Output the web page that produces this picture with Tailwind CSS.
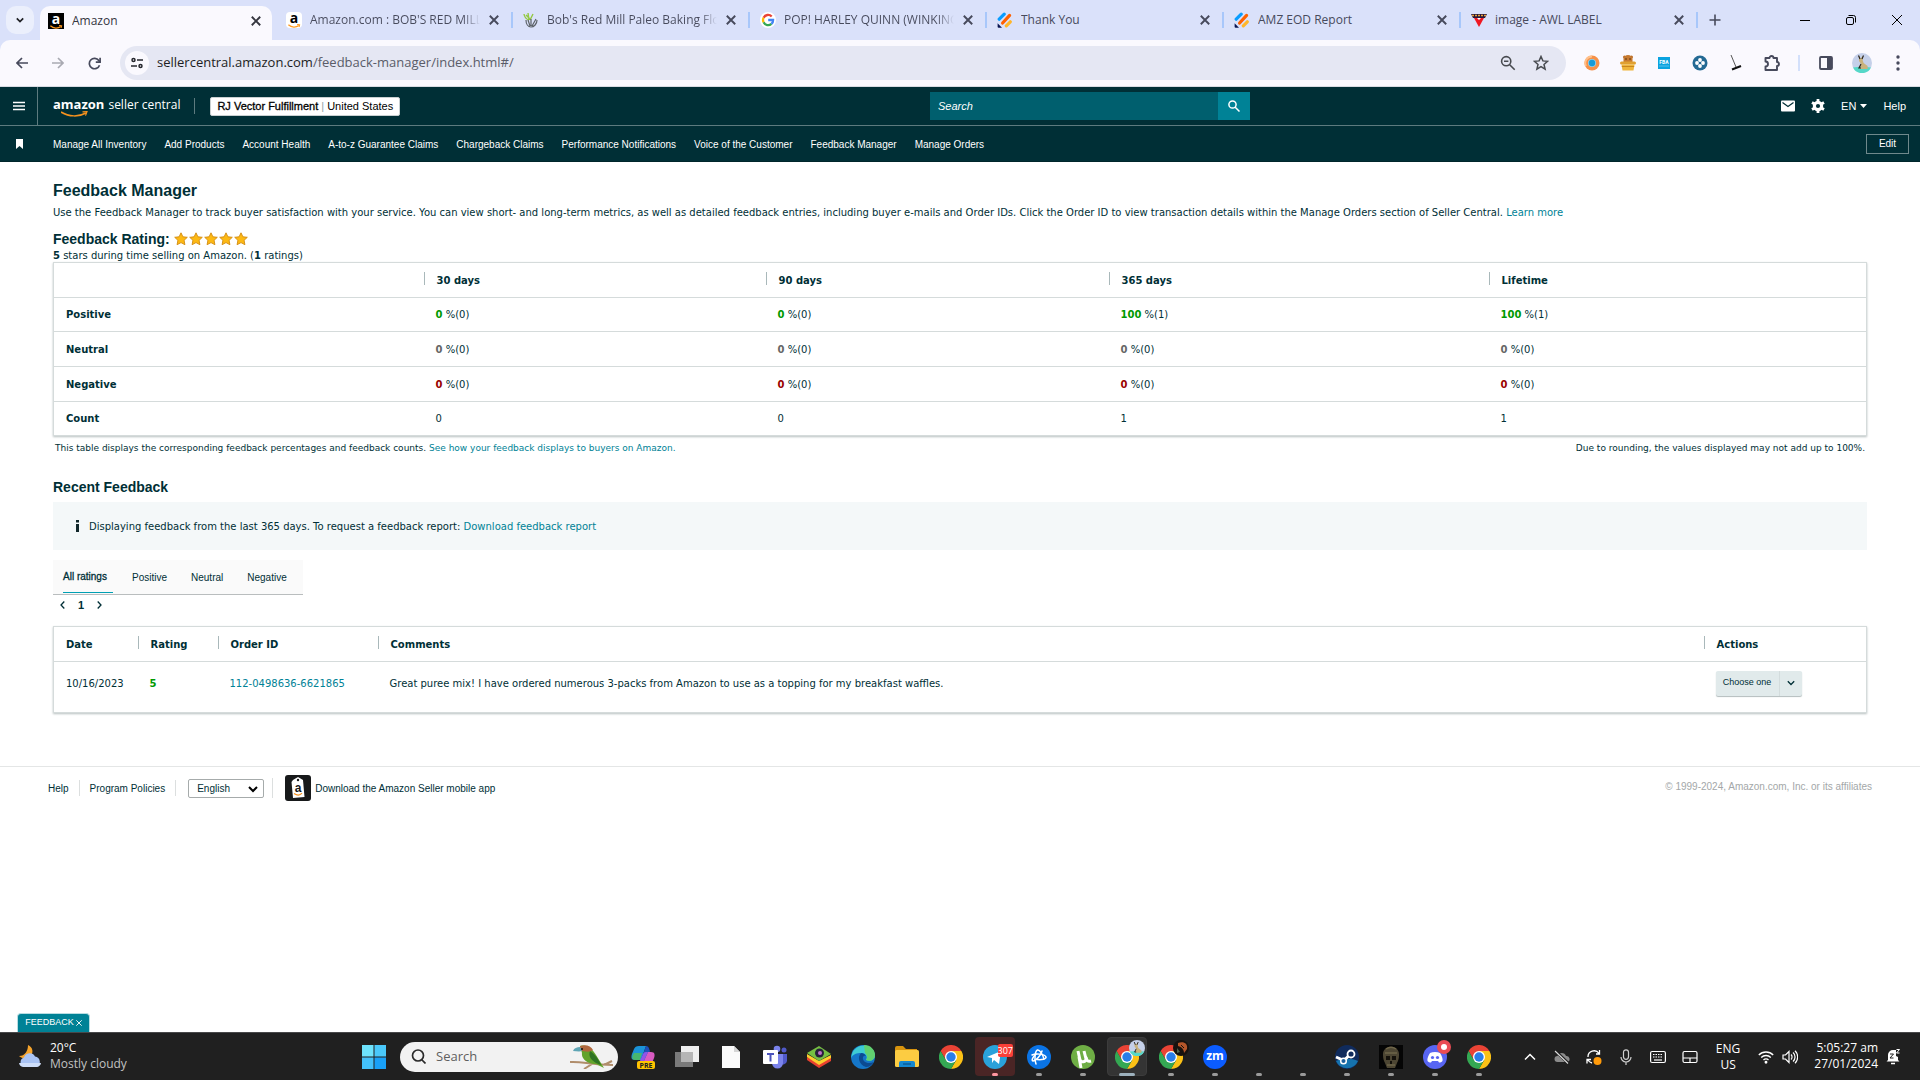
<!DOCTYPE html>
<html lang="en">
<head>
<meta charset="utf-8">
<title>Amazon</title>
<script src="https://cdn.jsdelivr.net/npm/@tailwindcss/browser@4"></script>
</head>
<body class="flex min-h-screen flex-col overflow-x-hidden bg-white font-['DejaVu_Sans',sans-serif] text-[10px] text-[#002f36]">

<svg class="hidden" aria-hidden="true">
  <symbol id="close" viewBox="0 0 10 10"><path d="M1.5 1.5l7 7M8.5 1.5l-7 7" stroke="currentColor" stroke-width="1.6" fill="none"/></symbol>
  <symbol id="chrome" viewBox="0 0 24 24">
    <path d="M12 6h10.4A12 12 0 0 0 1.6 6l5.2 9z" fill="#ea4335"/>
    <path d="M17.2 15L12 24A12 12 0 0 0 22.4 6H12z" fill="#fbc116"/>
    <path d="M6.8 15L1.6 6A12 12 0 0 0 12 24l5.2-9z" fill="#34a853"/>
    <circle cx="12" cy="12" r="6" fill="#fff"/><circle cx="12" cy="12" r="4.7" fill="#2a7de9"/>
  </symbol>
  <symbol id="star" viewBox="0 0 14 14"><path d="M7 .8l1.9 4 4.4.5-3.2 3 .8 4.4L7 10.6l-3.9 2.1.8-4.4-3.2-3 4.4-.5z" fill="#fdb913" stroke="#d28b10" stroke-width=".9"/></symbol>
  <symbol id="jot" viewBox="0 0 16 16"><g stroke-linecap="round" fill="none" stroke-width="3.2"><path d="M2.2 7.2l5-5" stroke="#0a9dff"/><path d="M5.6 11l7-7.6" stroke="#ff6100"/><path d="M9.3 13.8l4-4" stroke="#ffb629"/></g><path d="M.6 11.2l4.4 4.6H1.6a1 1 0 0 1-1-1z" fill="#0a1551"/></symbol>
  <symbol id="smile" viewBox="0 0 16 5"><path d="M1 1c4 3.6 9.5 3.6 13 .8" fill="none" stroke="#ff9a1f" stroke-width="1.6"/><path d="M11.8.6l3.4.2-.8 3" fill="none" stroke="#ff9a1f" stroke-width="1.2"/></symbol>
  <symbol id="avatar" viewBox="0 0 20 20"><circle cx="10" cy="10" r="10" fill="#c5d0e9"/><path d="M1 14.5c5-1 12-1 18 0A10 10 0 0 1 1 14.5z" fill="#55d8c8"/><path d="M7 3l1.5 2.5L11 3l-.4 4 1 3 4 3v3H8l1-5-2-3z" fill="#c9b27c"/><path d="M6.5 2.5L8 6M11.5 2.5L10 6M9 11l-2 4h2" stroke="#2b2620" stroke-width="1.2" fill="none"/></symbol>
</svg>

<!-- Tab strip -->
<header class="bg-[#dae1fa] font-['Open_Sans',sans-serif] text-[12px] text-[#474a5c]">
  <div class="flex h-10 items-end">
    <button aria-label="Search tabs" class="mr-1.5 ml-1.5 flex h-7 w-7 shrink-0 items-center justify-center self-center rounded-[10px] bg-[#ebeffc] text-[#1f2024]"><svg class="h-2 w-2" viewBox="0 0 8 8"><path d="M.8 2.3L4 5.5l3.200-3.200" fill="none" stroke="currentColor" stroke-width="1.7"/></svg></button>
    <nav class="flex h-full min-w-0 items-end" aria-label="Tabs">
      <div class="flex h-[34px] w-[232px] items-center gap-2 rounded-t-[10px] bg-[#faf9fe] pr-2.5 pb-1 pl-2 text-[#35363f]">
        <span class="relative h-4 w-4 shrink-0 bg-black text-center text-[14px] leading-[12px] font-bold text-white">a<svg class="absolute bottom-0 left-0 h-1 w-4"><use href="#smile"/></svg></span>
        <span class="min-w-0 flex-1 overflow-hidden whitespace-nowrap">Amazon</span>
        <button aria-label="Close tab"><svg class="h-3 w-3"><use href="#close"/></svg></button>
      </div>
      <div class="flex h-10 w-[241px] items-center gap-2 pr-[13px] pl-3.5">
        <span class="relative h-4 w-4 shrink-0 rounded-sm bg-white text-center text-[14px] leading-[11px] font-bold text-black">a<svg class="absolute bottom-0 left-0 h-1 w-4"><use href="#smile"/></svg></span>
        <span class="min-w-0 flex-1 overflow-hidden bg-linear-to-r from-[#474a5c] from-90% to-transparent bg-clip-text whitespace-nowrap text-transparent">Amazon.com : BOB'S RED MILL</span>
        <button aria-label="Close tab"><svg class="h-3 w-3"><use href="#close"/></svg></button>
      </div>
      <div class="flex h-10 w-[237px] items-center gap-2"><i class="mr-0.5 -ml-0.5 h-4 w-0.5 bg-[#a8c7fa]"></i>
        <svg class="h-4 w-4 shrink-0" viewBox="0 0 16 16"><path d="M6 8C3 7 1.5 5 1 2M6 8L5 1M7 8l3-6M7 7L3 3" stroke="#93c843" stroke-width="1.4" fill="none"/><path d="M3 8c0 4 2 7 5 7s6-3 6-7M7 14L5 8M8 14V7M9 14l4-7" stroke="#5b6167" stroke-width="1.2" fill="none"/></svg>
        <span class="min-w-0 flex-1 overflow-hidden bg-linear-to-r from-[#474a5c] from-90% to-transparent bg-clip-text whitespace-nowrap text-transparent">Bob's Red Mill Paleo Baking Flo</span>
        <button aria-label="Close tab" class="mr-[13px]"><svg class="h-3 w-3"><use href="#close"/></svg></button>
      </div>
      <div class="flex h-10 w-[237px] items-center gap-2"><i class="mr-0.5 -ml-0.5 h-4 w-0.5 bg-[#a8c7fa]"></i>
        <svg class="h-4 w-4 shrink-0" viewBox="0 0 16 16"><circle cx="8" cy="8" r="8" fill="#fff"/><g fill="none" stroke-width="2.3"><path d="M3.6 5.7A5 5 0 0 1 11.7 4.5" stroke="#ea4335"/><path d="M3.6 5.7a5 5 0 0 0 0 4.6" stroke="#fbbc05"/><path d="M3.6 10.3a5 5 0 0 0 7.8 1.6" stroke="#34a853"/><path d="M8.2 8h4.9a5 5 0 0 1-1.700 3.900" stroke="#4285f4"/></g></svg>
        <span class="min-w-0 flex-1 overflow-hidden bg-linear-to-r from-[#474a5c] from-90% to-transparent bg-clip-text whitespace-nowrap text-transparent">POP! HARLEY QUINN (WINKING</span>
        <button aria-label="Close tab" class="mr-[13px]"><svg class="h-3 w-3"><use href="#close"/></svg></button>
      </div>
      <div class="flex h-10 w-[237px] items-center gap-2"><i class="mr-0.5 -ml-0.5 h-4 w-0.5 bg-[#a8c7fa]"></i>
        <svg class="h-4 w-4 shrink-0"><use href="#jot"/></svg>
        <span class="min-w-0 flex-1 overflow-hidden whitespace-nowrap">Thank You</span>
        <button aria-label="Close tab" class="mr-[13px]"><svg class="h-3 w-3"><use href="#close"/></svg></button>
      </div>
      <div class="flex h-10 w-[237px] items-center gap-2"><i class="mr-0.5 -ml-0.5 h-4 w-0.5 bg-[#a8c7fa]"></i>
        <svg class="h-4 w-4 shrink-0"><use href="#jot"/></svg>
        <span class="min-w-0 flex-1 overflow-hidden whitespace-nowrap">AMZ EOD Report</span>
        <button aria-label="Close tab" class="mr-[13px]"><svg class="h-3 w-3"><use href="#close"/></svg></button>
      </div>
      <div class="flex h-10 w-[237px] items-center gap-2"><i class="mr-0.5 -ml-0.5 h-4 w-0.5 bg-[#a8c7fa]"></i>
        <svg class="h-4 w-4 shrink-0" viewBox="0 0 16 16"><path d="M0 2h16l-2 4H2z" fill="#2a1738"/><path d="M1 3.5h14" stroke="#e8a33a" stroke-width="1.5" stroke-dasharray="2 1"/><path d="M3 6h10l-5 9z" fill="#f01822"/><path d="M6 6h4l-2 2z" fill="#fff"/></svg>
        <span class="min-w-0 flex-1 overflow-hidden whitespace-nowrap">image - AWL LABEL</span>
        <button aria-label="Close tab" class="mr-[13px]"><svg class="h-3 w-3"><use href="#close"/></svg></button>
      </div>
      <i class="-ml-0.5 h-4 w-0.5 self-center bg-[#a8c7fa]"></i>
    </nav>
    <button aria-label="New tab" class="ml-[11px] self-center"><svg class="h-3 w-3" viewBox="0 0 12 12"><path d="M6 .5v11M.5 6h11" stroke="#474a5c" stroke-width="1.6"/></svg></button>
    <div class="ml-auto flex items-center gap-9 self-center pr-[18px] text-black">
      <button aria-label="Minimize"><svg class="h-2.5 w-2.5" viewBox="0 0 10 10"><path d="M0 5.5h10" stroke="currentColor"/></svg></button>
      <button aria-label="Restore"><svg class="h-2.5 w-2.5" viewBox="0 0 10 10" fill="none" stroke="currentColor"><rect x=".5" y="2.5" width="7" height="7" rx="1.5"/><path d="M2.5.5h5a2 2 0 0 1 2 2v5"/></svg></button>
      <button aria-label="Close window"><svg class="h-2.5 w-2.5" viewBox="0 0 10 10" stroke="currentColor"><path d="M0 0l10 10M10 0L0 10"/></svg></button>
    </div>
  </div>
  <!-- Toolbar -->
  <div class="flex h-[46px] items-center rounded-t-[10px] bg-[#faf9fe] pr-5 pl-4 text-[#474a5c]">
    <button aria-label="Back" class="mr-6"><svg class="h-3 w-3" viewBox="0 0 12 12" fill="none" stroke="#474a5c" stroke-width="1.7"><path d="M12 6H1.5M6 1L1 6l5 5"/></svg></button>
    <button aria-label="Forward" class="mr-6"><svg class="h-3 w-3" viewBox="0 0 12 12" fill="none" stroke="#a9aab2" stroke-width="1.7"><path d="M0 6h10.5M6 1l5 5-5 5"/></svg></button>
    <button aria-label="Reload" class="mr-[19px]"><svg class="h-[13px] w-[13px]" viewBox="0 0 13 13" fill="none" stroke="#474a5c" stroke-width="1.7"><path d="M11.5 8.2A5.2 5.2 0 1 1 10.8 3.5L12 5"/><path d="M12.1.8v4.400H7.8"/></svg></button>
    <div class="flex h-[34px] flex-1 items-center rounded-full bg-[#e5e7f3] pr-[17px] pl-[5px]">
      <button aria-label="Site information" class="mr-2 flex h-6 w-6 shrink-0 items-center justify-center rounded-full bg-[#faf9fe]"><svg class="h-3 w-3" viewBox="0 0 12 12" fill="none" stroke="#26272e" stroke-width="1.5"><circle cx="2.5" cy="3" r="1.5"/><path d="M6 3h6M0 9h6"/><circle cx="9.5" cy="9" r="1.5"/></svg></button>
      <div class="relative h-full flex-1"><input aria-label="Address" class="absolute inset-0 w-full bg-transparent text-[13px] outline-none">
        <span class="pointer-events-none flex h-full items-center text-[13px]"><span class="text-[#1c1d22]">sellercentral.amazon.com</span><span class="text-[#5a5c68]">/feedback-manager/index.html#/</span></span></div>
      <button aria-label="Zoom" class="mr-[17px]"><svg class="h-4 w-4" viewBox="0 0 16 16" fill="none" stroke="#474a4f" stroke-width="1.6"><circle cx="6.2" cy="6.2" r="4.6"/><path d="M9.7 9.7l5 5M4 6.2h4.400"/></svg></button>
      <button aria-label="Bookmark"><svg class="h-4 w-4" viewBox="0 0 16 16" fill="none" stroke="#474a4f" stroke-width="1.5"><path d="M8 1.5l1.9 4.4 4.7.4-3.600 3.100 1.100 4.700L8 11.600l-4.100 2.500L5 9.400 1.400 6.300l4.700-.4z"/></svg></button>
    </div>
    <div class="ml-[18px] flex items-center gap-5">
      <svg class="h-4 w-4" viewBox="0 0 16 16"><circle cx="8" cy="8" r="7.5" fill="#f69148"/><path d="M8 1.5A6.500 6.500 0 0 0 2 11" stroke="#ffc08a" stroke-width="2" fill="none"/><circle cx="8" cy="8" r="4" fill="#8ed0ee"/><circle cx="8" cy="8" r="3.2" fill="#169bd7"/></svg>
      <svg class="h-4 w-4" viewBox="0 0 16 16"><circle cx="4.5" cy="2" r="1.5" fill="#b96c28"/><circle cx="11.5" cy="2" r="1.5" fill="#b96c28"/><path d="M3.5 8V4a4 3.500 0 0 1 9 0v4z" fill="#c67a31"/><circle cx="6" cy="4" r=".7" fill="#3b1d08"/><circle cx="10" cy="4" r=".7" fill="#3b1d08"/><rect y="6.5" width="16" height="3" rx="1.5" fill="#e0a030"/><path d="M1.5 9.5h13l-1 6h-11z" fill="#efb53a"/><path d="M1.8 11.5h12.400" stroke="#c8861d"/></svg>
      <span class="flex h-3 w-4 items-center justify-center font-['Roboto',sans-serif]"><svg class="h-3 w-3" viewBox="0 0 12 12"><rect width="12" height="12" fill="#0aa3e0"/><text x="6" y="7" font-size="5" font-weight="700" text-anchor="middle" fill="#fff">FBA</text><path d="M1 9h10" stroke="#78cdf0" stroke-width=".7"/></svg></span>
      <svg class="h-4 w-4" viewBox="0 0 16 16"><circle cx="8" cy="8" r="7.5" fill="#246a94"/><g fill="#fff"><circle cx="8" cy="5" r="1.900"/><circle cx="8" cy="11" r="1.900"/><circle cx="5" cy="8" r="1.900"/><circle cx="11" cy="8" r="1.900"/></g><circle cx="8" cy="8" r="1" fill="#246a94"/></svg>
      <svg class="h-4 w-4" viewBox="0 0 16 16"><path d="M3 0l5 12" stroke="#555" stroke-width="1"/><path d="M4 14.500l9-3.500" stroke="#111" stroke-width="2"/></svg>
      <svg class="h-4 w-4" viewBox="0 0 16 16"><path d="M1.500 3h4a2 2 0 0 1 4 0h3.500v4a2 2 0 0 1 0 4v4H1.500v-3.500a2.500 2.500 0 0 0 0-5z" fill="none" stroke="#474a5c" stroke-width="1.900" stroke-linejoin="round"/></svg>
    </div>
    <i class="ml-[18px] h-4 w-0.5 bg-[#d3e0fb]"></i>
    <svg class="ml-[19px] h-3.5 w-3.5" viewBox="0 0 14 14"><rect x="1" y="1" width="12" height="12" rx="1" fill="none" stroke="#474a5c" stroke-width="1.800"/><path d="M8 1h5v12H8z" fill="#474a5c"/></svg>
    <svg class="ml-[19px] h-5 w-5"><use href="#avatar"/></svg>
    <svg class="ml-6 h-4 w-1" viewBox="0 0 4 16" fill="#474a5c"><circle cx="2" cy="2" r="1.700"/><circle cx="2" cy="8" r="1.700"/><circle cx="2" cy="14" r="1.700"/></svg>
  </div>
</header>

<!-- Seller Central header -->
<div class="bg-[#002f36] font-['Liberation_Sans',sans-serif] text-white">
  <div class="grid grid-cols-[930fr_320px_670fr] items-center border-t border-b border-t-[#d8dbe2] border-b-[#5d7b7f]">
    <div class="flex h-[38px] items-center">
      <button aria-label="Menu" class="flex h-full w-[38px] shrink-0 items-center justify-center border-r border-[#5d7b7f]"><svg class="h-2.5 w-3" viewBox="0 0 12 10"><path d="M0 1.5h12M0 5h12M0 8.5h12" stroke="#fff" stroke-width="1.5"/></svg></button>
      <a href="#" class="relative ml-[15px] flex items-baseline gap-1 pb-1 font-['Open_Sans',sans-serif] text-[12px] leading-4 whitespace-nowrap"><b class="text-[13px]">amazon</b><span>seller central</span><svg class="absolute bottom-0 left-2 h-1.5 w-7" viewBox="0 0 28 6"><path d="M0 1c8 5 18 5 25 1" fill="none" stroke="#f6921e" stroke-width="1.5"/><path d="M21.500.8l4.500-.2-1.500 4" fill="none" stroke="#f6921e" stroke-width="1.200"/></svg></a>
      <i class="ml-3.5 h-4 w-px shrink-0 bg-[#5d7b7f]"></i>
      <button class="ml-[15px] flex h-[19px] items-center rounded-xs border border-[#c9d0d1] bg-white px-1.5 text-[11px] whitespace-nowrap text-black"><span class="[-webkit-text-stroke:0.3px_black]">RJ Vector Fulfillment</span><span class="mx-[3px] text-[#8aa3a6]">|</span><span>United States</span></button>
    </div>
    <form class="flex h-7">
      <input aria-label="Search" placeholder="Search" class="min-w-0 flex-1 bg-[#005f6e] px-2 text-[11px] italic placeholder:text-white">
      <button type="button" aria-label="Search" class="flex w-8 items-center justify-center bg-[#008296]"><svg class="h-3 w-3" viewBox="0 0 12 12" fill="none" stroke="#fff" stroke-width="1.5"><circle cx="4.5" cy="4.5" r="3.6"/><path d="M7.2 7.2l4.300 4.300"/></svg></button>
    </form>
    <div class="flex items-center justify-end pr-3.5 text-[11px]">
      <a href="#" aria-label="Mail"><svg class="h-3 w-3.5" viewBox="0 0 14 12"><rect y=".5" width="14" height="11" rx="1" fill="#fff"/><path d="M1.5 2.5L7 6.500l5.500-4" fill="none" stroke="#002f36" stroke-width="1.200"/></svg></a>
      <a href="#" aria-label="Settings" class="ml-4"><svg class="h-3.5 w-3.5" viewBox="0 0 14 14"><circle cx="7" cy="7" r="3.600" fill="none" stroke="#fff" stroke-width="3.200"/><path d="M7 0v14M1 3.500l12 7M13 3.500l-12 7" stroke="#fff" stroke-width="2.800"/><circle cx="7" cy="7" r="2.100" fill="#002f36"/></svg></a>
      <button class="ml-4 flex items-center gap-1">EN<svg class="h-1 w-[7px]" viewBox="0 0 7 4"><path d="M0 0h7L3.500 4z" fill="#fff"/></svg></button>
      <a href="#" class="ml-4">Help</a>
    </div>
  </div>
  <nav class="flex h-9 items-center border-b border-[#00262b] pr-[11px] text-[10px] whitespace-nowrap" aria-label="Favorites">
    <svg class="ml-4 h-2.5 w-[7px]" viewBox="0 0 7 10"><path d="M0 0h7v10L3.500 7 0 10z" fill="#fff"/></svg>
    <div class="ml-[30px] flex gap-[18px] pt-0.5">
      <a href="#">Manage All Inventory</a><a href="#">Add Products</a><a href="#">Account Health</a><a href="#">A-to-z Guarantee Claims</a><a href="#">Chargeback Claims</a><a href="#">Performance Notifications</a><a href="#">Voice of the Customer</a><a href="#">Feedback Manager</a><a href="#">Manage Orders</a>
    </div>
    <button class="ml-auto h-5 w-[43px] border border-[#6f898c]">Edit</button>
  </nav>
</div>

<!-- Page -->
<main class="px-[53px]">
  <h1 class="mt-[17px] font-['Liberation_Sans',sans-serif] text-[16px] leading-6 font-bold">Feedback Manager</h1>
  <p class="mt-0.5 leading-4">Use the Feedback Manager to track buyer satisfaction with your service. You can view short- and long-term metrics, as well as detailed feedback entries, including buyer e-mails and Order IDs. Click the Order ID to view transaction details within the Manage Orders section of Seller Central. <a href="#" class="text-[#008296]">Learn more</a></p>
  <div class="mt-2 flex items-center gap-1">
    <h2 class="font-['Liberation_Sans',sans-serif] text-[14px] leading-5 font-bold">Feedback Rating:</h2>
    <span class="flex gap-px" role="img" aria-label="5 stars"><svg class="h-3.5 w-3.5"><use href="#star"/></svg><svg class="h-3.5 w-3.5"><use href="#star"/></svg><svg class="h-3.5 w-3.5"><use href="#star"/></svg><svg class="h-3.5 w-3.5"><use href="#star"/></svg><svg class="h-3.5 w-3.5"><use href="#star"/></svg></span>
  </div>
  <p class="leading-[13px]"><b>5</b> stars during time selling on Amazon. (<b>1</b> ratings)</p>

  <table class="w-full table-fixed border border-[#d5dbdb] text-left shadow-[0_1px_2px_#b8c0c0]">
    <colgroup><col class="w-[370px]"><col class="w-[342px]"><col class="w-[343px]"><col class="w-[380px]"><col></colgroup>
    <thead><tr class="h-[35px] border-b border-[#d5dbdb]">
      <td></td>
      <th><span class="flex h-4 items-center"><i class="mb-1 h-[13px] w-px bg-[#a9b8ba]"></i><span class="pl-3">30 days</span></span></th>
      <th><span class="flex h-4 items-center"><i class="mb-1 h-[13px] w-px bg-[#a9b8ba]"></i><span class="pl-3">90 days</span></span></th>
      <th><span class="flex h-4 items-center"><i class="mb-1 h-[13px] w-px bg-[#a9b8ba]"></i><span class="pl-3">365 days</span></span></th>
      <th><span class="flex h-4 items-center"><i class="mb-1 h-[13px] w-px bg-[#a9b8ba]"></i><span class="pl-3">Lifetime</span></span></th>
    </tr></thead>
    <tbody>
      <tr class="h-[34px] border-b border-[#d5dbdb]"><th class="pl-3">Positive</th><td class="pl-3"><b class="text-[#009900]">0</b> %(0)</td><td class="pl-3"><b class="text-[#009900]">0</b> %(0)</td><td class="pl-3"><b class="text-[#009900]">100</b> %(1)</td><td class="pl-3"><b class="text-[#009900]">100</b> %(1)</td></tr>
      <tr class="h-[35px] border-b border-[#d5dbdb]"><th class="pl-3">Neutral</th><td class="pl-3"><b class="text-[#666]">0</b> %(0)</td><td class="pl-3"><b class="text-[#666]">0</b> %(0)</td><td class="pl-3"><b class="text-[#666]">0</b> %(0)</td><td class="pl-3"><b class="text-[#666]">0</b> %(0)</td></tr>
      <tr class="h-[35px] border-b border-[#d5dbdb]"><th class="pl-3">Negative</th><td class="pl-3"><b class="text-[#990000]">0</b> %(0)</td><td class="pl-3"><b class="text-[#990000]">0</b> %(0)</td><td class="pl-3"><b class="text-[#990000]">0</b> %(0)</td><td class="pl-3"><b class="text-[#990000]">0</b> %(0)</td></tr>
      <tr class="h-[34px]"><th class="pl-3">Count</th><td class="pl-3">0</td><td class="pl-3">0</td><td class="pl-3">1</td><td class="pl-3">1</td></tr>
    </tbody>
  </table>
  <div class="mt-1 flex justify-between px-0.5 text-[9px] leading-4">
    <p>This table displays the corresponding feedback percentages and feedback counts. <a href="#" class="text-[#008296]">See how your feedback displays to buyers on Amazon.</a></p>
    <p>Due to rounding, the values displayed may not add up to 100%.</p>
  </div>

  <h2 class="mt-[21px] font-['Liberation_Sans',sans-serif] text-[14px] leading-5 font-bold">Recent Feedback</h2>
  <div class="mt-[5px] flex h-12 items-center bg-[#f4f8f9] pl-[23px]">
    <svg class="mr-2.5 h-3 w-[3px]" viewBox="0 0 3 12"><path d="M0 0h3v2.500H0zM0 4h3v8H0z" fill="#11272b"/></svg>
    <p>Displaying feedback from the last 365 days. To request a feedback report: <a href="#" class="text-[#008296]">Download feedback report</a></p>
  </div>
  <div role="tablist" class="mt-2.5 flex h-[35px] w-[250px] border-b border-[#b9bdbe] bg-[#fafafa] px-2.5 font-['Liberation_Sans',sans-serif]">
    <button role="tab" aria-selected="true" class="mb-px w-[50px] border-b border-[#00a0b4] pt-px text-left [-webkit-text-stroke:0.3px_#002f36]">All ratings</button>
    <button role="tab" class="ml-[19px]">Positive</button><button role="tab" class="ml-6">Neutral</button><button role="tab" class="ml-6">Negative</button>
  </div>
  <nav aria-label="Pages" class="flex h-5 items-center gap-[13px] pl-[7px] font-['Liberation_Sans',sans-serif] text-[11px]">
    <button aria-label="Previous page"><svg class="h-2 w-[5px]" viewBox="0 0 5 8"><path d="M4.300.5L1 4l3.300 3.500" fill="none" stroke="currentColor" stroke-width="1.300"/></svg></button>
    <b>1</b>
    <button aria-label="Next page"><svg class="h-2 w-[5px]" viewBox="0 0 5 8"><path d="M.7.5L4 4 .7 7.500" fill="none" stroke="currentColor" stroke-width="1.300"/></svg></button>
  </nav>

  <table class="mt-[11px] w-full table-fixed border border-[#d5dbdb] text-left shadow-[0_1px_2px_#b8c0c0]">
    <colgroup><col class="w-[84px]"><col class="w-20"><col class="w-40"><col><col class="w-[163px]"></colgroup>
    <thead><tr class="h-[35px] border-b border-[#d5dbdb]">
      <th class="pl-3">Date</th>
      <th><span class="flex h-4 items-center"><i class="mb-1 h-[13px] w-px bg-[#a9b8ba]"></i><span class="pl-3">Rating</span></span></th>
      <th><span class="flex h-4 items-center"><i class="mb-1 h-[13px] w-px bg-[#a9b8ba]"></i><span class="pl-3">Order ID</span></span></th>
      <th><span class="flex h-4 items-center"><i class="mb-1 h-[13px] w-px bg-[#a9b8ba]"></i><span class="pl-3">Comments</span></span></th>
      <th><span class="flex h-4 items-center"><i class="mb-1 h-[13px] w-px bg-[#a9b8ba]"></i><span class="pl-3">Actions</span></span></th>
    </tr></thead>
    <tbody><tr class="h-[51px]">
      <td class="pb-2 pl-3 whitespace-nowrap">10/16/2023</td>
      <td class="pb-2 pl-3"><b class="text-[#009900]">5</b></td>
      <td class="pb-2 pl-3 whitespace-nowrap"><a href="#" class="text-[#008296]">112-0498636-6621865</a></td>
      <td class="pb-2 pl-3">Great puree mix! I have ordered numerous 3-packs from Amazon to use as a topping for my breakfast waffles.</td>
      <td class="pb-2 pl-3"><button class="flex h-[25px] w-[86px] items-center rounded-xs bg-[#e1eaeb] font-['Liberation_Sans',sans-serif] text-[9px] shadow-[0_1px_1px_#b3bcbd]"><span class="flex h-full flex-1 items-center justify-center border-r border-[#d3dcdd]">Choose one</span><span class="flex w-[22px] justify-center"><svg class="h-2 w-2" viewBox="0 0 8 8"><path d="M.8 2.300L4 5.500l3.200-3.200" fill="none" stroke="currentColor" stroke-width="1.300"/></svg></span></button></td>
    </tr></tbody>
  </table>
</main>

<!-- Footer -->
<footer class="mt-[53px] flex items-center border-t border-[#e4e6e6] px-12 pt-2 font-['Liberation_Sans',sans-serif] text-[10px]">
  <a href="#">Help</a>
  <i class="mx-2.5 h-4 w-px bg-[#dcdfdf]"></i>
  <a href="#">Program Policies</a>
  <i class="mr-3 ml-2.5 h-4 w-px bg-[#dcdfdf]"></i>
  <div class="relative"><select aria-label="Language" class="h-[19px] w-[76px] appearance-none rounded-xs border border-[#a6abab] bg-white pl-2"><option>English</option></select><svg class="pointer-events-none absolute top-1.5 right-1.5 h-2 w-2.5" viewBox="0 0 10 8"><path d="M1 2l4 4 4-4" fill="none" stroke="#000" stroke-width="2"/></svg></div>
  <i class="mr-3 ml-2 h-5 w-px bg-[#dcdfdf]"></i>
  <a href="#" class="flex items-center gap-1"><svg class="h-[26px] w-[26px]" viewBox="0 0 26 26"><rect width="26" height="26" rx="3" fill="#17191a"/><path d="M8 5l5-3 5 3 1.500 17L8 23 6.500 7z" fill="#fff"/><circle cx="13" cy="5" r="1.200" fill="#17191a"/><text x="13" y="16.500" font-size="12" font-weight="700" text-anchor="middle" fill="#17191a">a</text><path d="M9 18.500c3 2 6 2 8-.3" stroke="#f6921e" fill="none" stroke-width="1.200"/></svg>Download the Amazon Seller mobile app</a>
  <span class="ml-auto pb-1 text-[#a3a7a8]">© 1999-2024, Amazon.com, Inc. or its affiliates</span>
</footer>

<button class="mt-auto ml-[17px] flex h-[19px] w-[73px] items-center justify-center gap-0.5 rounded-t-sm border border-b-0 border-[#b8dde2] bg-[#008296] font-['Liberation_Sans',sans-serif] text-[9px] text-white">FEEDBACK<svg class="h-1.5 w-1.5" viewBox="0 0 6 6"><path d="M.3.3l5.400 5.400M5.700.3L.3 5.700" stroke="#fff" stroke-width=".9"/></svg></button>

<!-- Taskbar -->
<div class="flex h-12 shrink-0 items-center border-t border-[#48484a] bg-[#202020] font-['Open_Sans',sans-serif] text-[12px] text-white">
  <button class="flex w-[352px] items-center gap-2 pb-0.5 pl-[18px] text-left leading-4">
    <svg class="h-6 w-6" viewBox="0 0 24 24"><path d="M10 1c5 2 6 8 2 12-3 2-8 2-11-1 6 0 9-5 9-11z" fill="#f6a42c"/><path d="M6 23a5 5 0 0 1 0-9.500 6 6 0 0 1 11-1A5.500 5.500 0 0 1 18.500 23z" fill="#a9c3f4"/><path d="M6 23a5 5 0 0 1-5-4h22a5 5 0 0 1-4.500 4z" fill="#cfdefa"/></svg>
    <span>20°C<br><span class="text-[#c2c2c2]">Mostly cloudy</span></span>
  </button>
  <button aria-label="Start" class="flex w-11 justify-center"><svg class="h-6 w-6" viewBox="0 0 24 24"><path d="M0 0h11.500v11.500H0z" fill="#6ee3fc"/><path d="M12.500 0H24v11.500H12.500z" fill="#4ac8fa"/><path d="M0 12.500h11.500V24H0z" fill="#43c0f9"/><path d="M12.500 12.500H24V24H12.500z" fill="#19a0f7"/></svg></button>
  <div class="ml-1 flex h-[30px] w-[218px] items-center rounded-full bg-[#f2f2f2] pr-1 pl-[11px]">
    <svg class="mr-2.5 h-[15px] w-[15px] shrink-0" viewBox="0 0 15 15" fill="none" stroke="#2a2a2a" stroke-width="1.700"><circle cx="7" cy="6.500" r="5.500"/><path d="M10.500 10.500l4 4"/></svg>
    <input aria-label="Taskbar search" placeholder="Search" class="min-w-0 flex-1 text-[13px] placeholder:text-[#5f5f5f]">
    <svg class="h-6 w-11 shrink-0" viewBox="0 0 44 24"><path d="M0 17c12-1 20 3 43 3M22 19l-8 5M34 20l8-4" stroke="#b08d6b" stroke-width="2" fill="none"/><path d="M10 1c8-2 12 3 16 9l8 13-8-4c-8 0-15-5-14-11z" fill="#62a32b"/><path d="M20 6c5 3 9 9 11 14l-5-2c-5-3-8-7-6-12z" fill="#2f7424"/><path d="M10 1c6-2 11 0 13 4-4 3-9 1-12 1z" fill="#b0683e"/><path d="M10 2C7 2 4 3 3 6c3 0 6 1 9 0z" fill="#5fa5b5"/><circle cx="12" cy="4" r="1" fill="#111"/></svg>
  </div>
  <nav aria-label="Apps" class="ml-[3px] flex h-full">
    <button aria-label="Copilot" class="flex w-11 items-center justify-center"><svg class="h-6 w-6" viewBox="0 0 24 24"><path d="M8 1h7l-5 14H4c-4 0-4-3-3-6l2-5c1-2 2-3 5-3z" fill="#1b93d8"/><path d="M15 1c3 0 3 3 4 5l-4 9h-5z" fill="#1d50b8"/><path d="M3 8l8 0-2 7H4c-4 0-3-4-1-7z" fill="#48b66e"/><path d="M17 7h3c4 0 4 3 3 6l-2 5-5 2h-5z" fill="#d95bc1"/><path d="M17 7l-6 13-3-2 4-9c1-2 2-2 5-2z" fill="#8e55e8"/><rect x="6" y="16" width="18" height="8" rx="2" fill="#ffc400"/><text x="15" y="22.500" font-size="7" font-weight="700" text-anchor="middle" fill="#222">PRE</text></svg></button>
    <button aria-label="Task view" class="flex w-11 items-center justify-center"><svg class="h-6 w-6" viewBox="0 0 24 24"><path d="M6 1h18v16H6z" fill="#eee"/><path d="M0 7h18v15H0z" fill="#7a7a7a"/><path d="M6 7h12v10H6z" fill="#b5b5b5"/></svg></button>
    <button aria-label="File" class="flex w-11 items-center justify-center"><svg class="h-6 w-6" viewBox="0 0 24 24"><path d="M3 1h12l6 6v16H3z" fill="#fafafa"/><path d="M15 1v6h6" fill="#d5d5d5"/></svg></button>
    <button aria-label="Teams" class="flex w-11 items-center justify-center"><svg class="h-6 w-6" viewBox="0 0 24 24"><circle cx="14" cy="4" r="3.300" fill="#7b83eb"/><circle cx="21" cy="5" r="2.500" fill="#5059c9"/><path d="M17 9h7v7a4 4 0 0 1-7 2z" fill="#5059c9"/><path d="M9 9h11v9a5.500 5.500 0 0 1-11 0z" fill="#7b83eb"/><rect y="5" width="15" height="14" rx="1" fill="#fff"/><path d="M4 9h7M7.500 9v7.500" stroke="#4b53bc" stroke-width="2"/></svg></button>
    <button aria-label="BlueStacks" class="flex w-11 items-center justify-center"><svg class="h-6 w-6" viewBox="0 0 24 24"><path d="M0 15l12 8 12-7v-4L12 18 0 12z" fill="#e8412f"/><path d="M0 12l12 8 12-7v-3L12 16 0 9z" fill="#fbd02d"/><path d="M0 8l12 8 12-7-12-8z" fill="#76c043"/><circle cx="12.500" cy="8" r="4.500" fill="#26213a"/><circle cx="13" cy="8" r="2" fill="#bb6fc9"/></svg></button>
    <button aria-label="Edge" class="flex w-11 items-center justify-center"><svg class="h-6 w-6" viewBox="0 0 24 24"><circle cx="12" cy="12" r="12" fill="#1576c8"/><path d="M1 9C4-2 22-3 24 10c0 5-5 7-9 5 2-3 0-7-5-7-4 0-8 1-10 5z" fill="#3ecbd3"/><path d="M13 0c7 0 11 5 11 10 0 5-5 7-9 5 2-3 1-5-1-7z" fill="#61d06f"/><path d="M10 8c-4 4-2 12 5 14 3 0 6-2 8-5-7 3-12-1-11-5 .5-1 2-1.500 3-1-1-2-3-3-5-3z" fill="#0c4a91"/></svg></button>
    <button aria-label="File Explorer" class="flex w-11 items-center justify-center"><svg class="h-6 w-6" viewBox="0 0 24 24"><path d="M0 3a2 2 0 0 1 2-2h6l3 3h11v6H0z" fill="#d8940e"/><rect y="5" width="24" height="17" rx="1.500" fill="#fccc42"/><path d="M4 22v-4a2 2 0 0 1 2-2h12a2 2 0 0 1 2 2v4z" fill="#1487d0"/><path d="M8 19h8" stroke="#0a5c99" stroke-width="1.500"/></svg></button>
    <button aria-label="Chrome" class="flex w-11 items-center justify-center"><svg class="h-6 w-6"><use href="#chrome"/></svg></button>
    <button aria-label="Telegram" class="relative flex w-11 items-center justify-center"><span class="absolute inset-x-0.5 inset-y-1 rounded-sm bg-[#4a2525]"></span><svg class="relative h-6 w-6" viewBox="0 0 24 24"><circle cx="12" cy="12" r="12" fill="#2aa1da"/><path d="M4 12l14-6-2 13-5-4-2 3v-5z" fill="#fff"/></svg><span class="absolute top-[11px] right-1 rounded-xs bg-[#fb3f38] text-[9px] leading-[13px]">307</span><i class="absolute bottom-1 h-[3px] w-1.5 rounded-full bg-[#ff96a0]"></i></button>
    <button aria-label="Battle.net" class="relative flex w-11 items-center justify-center"><svg class="h-6 w-6" viewBox="0 0 24 24"><circle cx="12" cy="12" r="12" fill="#0a74e6"/><g fill="none" stroke="#fff" stroke-width="1.500" stroke-linecap="round"><path d="M9 19C7 14 8 6 10.500 5c2-.5 5 4 6.500 9"/><path d="M5 10c4-2 13-1 14 2 .5 2-4 3-9 2.500"/><path d="M15 6c-1 4-6 10-9 10-2-.5 0-4 3-7"/></g></svg><i class="absolute bottom-1 h-[3px] w-1.5 rounded-full bg-[#9a9a9a]"></i></button>
    <button aria-label="uTorrent" class="relative flex w-11 items-center justify-center"><svg class="h-6 w-6" viewBox="0 0 24 24"><circle cx="12" cy="12" r="12" fill="#6fae45"/><path d="M7 6l2 9c1 3 6 2 6-1l-2-8M15 12c1 4 2 5 5 4M8 12l2 11" fill="none" stroke="#fff" stroke-width="3"/></svg><i class="absolute bottom-1 h-[3px] w-1.5 rounded-full bg-[#9a9a9a]"></i></button>
    <button aria-label="Chrome, current window" class="relative flex w-11 items-center justify-center"><span class="absolute inset-x-0.5 inset-y-1 rounded-sm border border-[#3c3c3c] bg-[#343434]"></span><svg class="relative h-6 w-6"><use href="#chrome"/></svg><svg class="absolute top-[7px] right-1 h-4 w-4"><use href="#avatar"/></svg><i class="absolute bottom-1 h-[3px] w-4 rounded-full bg-[#9db1bd]"></i></button>
    <button aria-label="Chrome, second profile" class="relative flex w-11 items-center justify-center"><svg class="h-6 w-6"><use href="#chrome"/></svg><svg class="absolute top-[7px] right-1 h-4 w-4" viewBox="0 0 16 16"><circle cx="8" cy="8" r="8" fill="#17120f"/><path d="M5 3c6-2 10 1 9 6l-3 4c0-3-2-6-6-7z" fill="#b5562a"/><path d="M4 8l3 4-3 1z" fill="#50634c"/><path d="M8 5l3 3" stroke="#17120f"/></svg><i class="absolute bottom-1 h-[3px] w-1.5 rounded-full bg-[#9a9a9a]"></i></button>
    <button aria-label="Zoom" class="relative flex w-11 items-center justify-center"><span class="flex h-6 w-6 items-center justify-center rounded-full bg-[#0b5cff] pb-0.5 text-[12px] font-bold">zm</span><i class="absolute bottom-1 h-[3px] w-1.5 rounded-full bg-[#9a9a9a]"></i></button>
    <span class="relative flex w-11 justify-center"><i class="absolute bottom-1 h-[3px] w-1.5 rounded-full bg-[#9a9a9a]"></i></span>
    <span class="relative flex w-11 justify-center"><i class="absolute bottom-1 h-[3px] w-1.5 rounded-full bg-[#9a9a9a]"></i></span>
    <button aria-label="Steam" class="relative flex w-11 items-center justify-center"><svg class="h-6 w-6" viewBox="0 0 24 24"><circle cx="12" cy="12" r="12" fill="#102b5c"/><path d="M1 16a12 12 0 0 0 22 0c-6-3-16-3-22 0z" fill="#1673ae"/><path d="M1 12l8 3.500 6-6" stroke="#fff" stroke-width="3" fill="none"/><circle cx="16" cy="9" r="3.500" fill="#102b5c" stroke="#fff" stroke-width="1.800"/><circle cx="8.500" cy="16" r="2.800" fill="#1d5f9c" stroke="#fff" stroke-width="1.500"/></svg><i class="absolute bottom-1 h-[3px] w-1.5 rounded-full bg-[#9a9a9a]"></i></button>
    <button aria-label="Game" class="relative flex w-11 items-center justify-center"><svg class="h-6 w-6" viewBox="0 0 24 24"><path d="M0 0h24v24H0z" fill="#050505"/><path d="M4 10C3-1 21-1 20 10c0 4-1 6-2 8l-2 5H8l-2-5c-1-2-2-4-2-8z" fill="#4d4633"/><path d="M7 4c3-2 7-2 10 0M6 8h12M8 20h8" stroke="#6e6549" stroke-width="1.500" fill="none"/><path d="M7 11h4v4H7zM13 11h4v4h-4zM11 16h2v3h-2z" fill="#14110b"/></svg><i class="absolute bottom-1 h-[3px] w-1.5 rounded-full bg-[#9a9a9a]"></i></button>
    <button aria-label="Discord" class="relative flex w-11 items-center justify-center"><svg class="h-6 w-6" viewBox="0 0 24 24"><circle cx="12" cy="12" r="12" fill="#5865f2"/><path d="M7 8c3-1.500 7-1.500 10 0 2 3 3 6 2.500 8-1 1-2 1.500-3.500 1.500l-1-1.500H9l-1 1.500C6.500 17.500 5.500 17 4.500 16 4 14 5 11 7 8z" fill="#fff"/><circle cx="9.500" cy="12.500" r="1.600" fill="#5865f2"/><circle cx="14.500" cy="12.500" r="1.600" fill="#5865f2"/></svg><svg class="absolute top-[7px] right-1.5 h-3.5 w-3.5" viewBox="0 0 14 14"><circle cx="7" cy="7" r="7" fill="#ea4c54"/><circle cx="7" cy="7" r="3" fill="#fff"/></svg><i class="absolute bottom-1 h-[3px] w-1.5 rounded-full bg-[#9a9a9a]"></i></button>
    <button aria-label="Chrome, third window" class="relative flex w-11 items-center justify-center"><svg class="h-6 w-6"><use href="#chrome"/></svg><i class="absolute bottom-1 h-[3px] w-1.5 rounded-full bg-[#9a9a9a]"></i></button>
  </nav>
  <div class="ml-auto flex items-center pr-5">
    <div class="flex items-center gap-4">
      <svg class="mr-0.5 h-4 w-3" viewBox="0 0 12 16"><path d="M1 10.500l5-5 5 5" fill="none" stroke="#fff" stroke-width="1.500"/></svg>
      <svg class="h-4 w-4" viewBox="0 0 16 16"><path d="M3.500 13a3 3 0 0 1 0-6 4.500 4.500 0 0 1 8.500 0 3 3 0 0 1 1 6z" fill="#8b8b8b"/><path d="M1.500 2l13 12.500" stroke="#202020" stroke-width="3"/><path d="M1 2l13 12.500" stroke="#ddd" stroke-width="1.100"/></svg>
      <svg class="h-4 w-4" viewBox="0 0 16 16"><path d="M2 8a6 6 0 0 1 11-3.500M13.500 1v4H10M6 14a6 6 0 0 1-4-3M1 14.500v-4h4" fill="none" stroke="#fff" stroke-width="1.300"/><circle cx="11.500" cy="12" r="4" fill="#ff9a0a"/></svg>
      <svg class="h-4 w-4" viewBox="0 0 16 16" fill="none" stroke="#d0d0d0" stroke-width="1.200"><rect x="5.500" y=".8" width="5" height="9.500" rx="2.500"/><path d="M3 8a5 5 0 0 0 10 0M8 13v3"/></svg>
      <svg class="h-4 w-4" viewBox="0 0 16 16" fill="none" stroke="#fff" stroke-width="1.200"><rect x=".6" y="2.500" width="14.800" height="11" rx="1.500"/><path d="M3 5.500h10M3 8h10" stroke-dasharray="1.500 1"/><path d="M4 11h8"/></svg>
      <svg class="h-4 w-4" viewBox="0 0 16 16" fill="none" stroke="#fff" stroke-width="1.200"><rect x="1" y="2.500" width="14" height="11" rx="1.500"/><path d="M1 9h14M8 9v4.500"/></svg>
    </div>
    <button class="ml-[18px] text-center leading-4">ENG<br>US</button>
    <button aria-label="Network and volume" class="ml-[18px] flex gap-2">
      <svg class="h-4 w-4" viewBox="0 0 16 16" fill="none" stroke="#fff" stroke-width="1.300"><path d="M.8 6a10.200 10.200 0 0 1 14.400 0M3.200 8.500a6.800 6.800 0 0 1 9.600 0M5.500 11a3.500 3.500 0 0 1 5 0"/><circle cx="8" cy="13.200" r=".8" fill="#fff"/></svg>
      <svg class="h-4 w-4" viewBox="0 0 16 16" fill="none" stroke="#fff" stroke-width="1.200"><path d="M1 6h2.500L7 2.500v11L3.500 10H1zM9 5.500a3.500 3.500 0 0 1 0 5M11 3.500a6 6 0 0 1 0 9M13 1.800a8.500 8.500 0 0 1 0 12.400"/></svg>
    </button>
    <button class="ml-4 pb-0.5 text-right leading-4">5:05:27 am<br>27/01/2024</button>
    <svg class="ml-2 h-4 w-3.5" viewBox="0 0 14 16"><path d="M2 6a5 5 0 0 1 5-5h3v6l2 1v3l1.500 1.500H.5L2 11z" fill="#fff"/><path d="M5 14.500h4" stroke="#fff" stroke-width="1.500"/><path d="M4 5h3.500L4 9h3.500" stroke="#202020" fill="none"/><path d="M10.500.5h3l-3 3.500h3" stroke="#fff" fill="none"/></svg>
  </div>
</div>
</body>
</html>
